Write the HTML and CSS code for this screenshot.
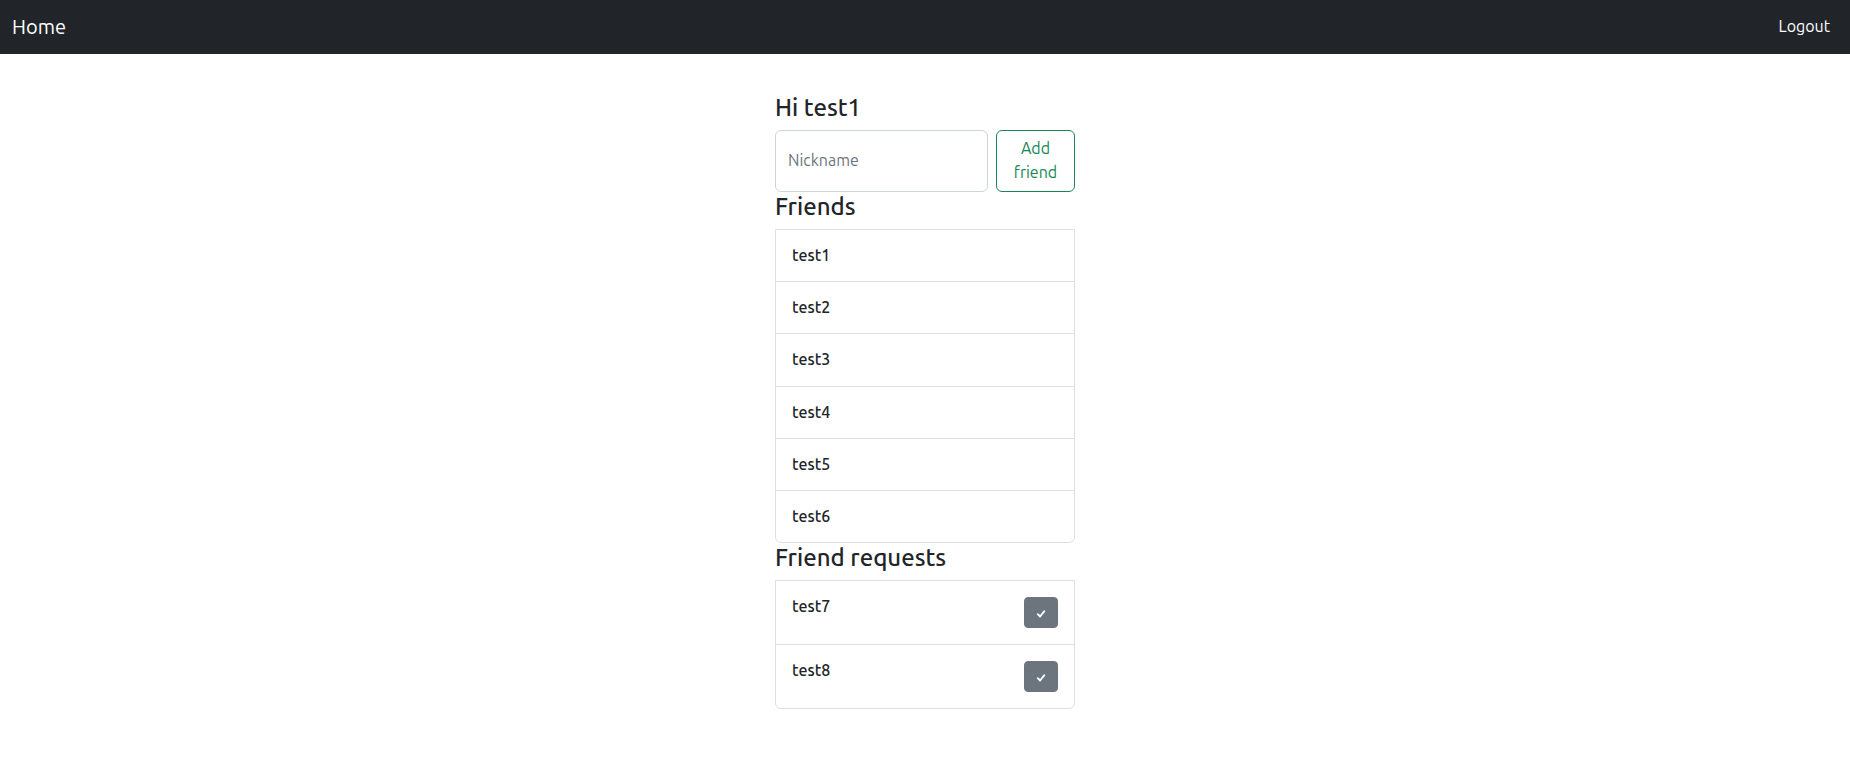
FILE: index.html
```html
<!DOCTYPE html>
<html lang="en">
<head>
<meta charset="utf-8">
<meta name="viewport" content="width=device-width, initial-scale=1">
<title>Home</title>
<link rel="stylesheet" href="styles.css">
</head>
<body>
<nav class="navbar">
  <a class="navbar-brand" href="#">Home</a>
  <a class="nav-link" href="#">Logout</a>
</nav>
<main class="content">
  <h1 class="heading">Hi test1</h1>
  <form class="add-form">
    <input class="form-control" type="text" placeholder="Nickname" aria-label="Nickname">
    <button class="btn-add" type="submit">Add friend</button>
  </form>
  <h2 class="heading">Friends</h2>
  <ul class="list">
    <li class="list-item"><span class="name">test1</span></li>
    <li class="list-item"><span class="name">test2</span></li>
    <li class="list-item"><span class="name">test3</span></li>
    <li class="list-item"><span class="name">test4</span></li>
    <li class="list-item"><span class="name">test5</span></li>
    <li class="list-item"><span class="name">test6</span></li>
  </ul>
  <h2 class="heading">Friend requests</h2>
  <ul class="list">
    <li class="list-item">
      <span class="name">test7</span>
      <button class="btn-accept" type="button" aria-label="Accept test7">
        <svg class="icon" viewBox="0 0 16 16" aria-hidden="true"><path d="M4.6 8.7 7 11.2 11.5 5.6"/></svg>
      </button>
    </li>
    <li class="list-item">
      <span class="name">test8</span>
      <button class="btn-accept" type="button" aria-label="Accept test8">
        <svg class="icon" viewBox="0 0 16 16" aria-hidden="true"><path d="M4.6 8.7 7 11.2 11.5 5.6"/></svg>
      </button>
    </li>
  </ul>
</main>
</body>
</html>
```
FILE: styles.css
```css
*,
*::before,
*::after {
  box-sizing: border-box;
}

body {
  margin: 0;
  background: #fff;
  color: #212529;
  font-family: Ubuntu, Roboto, "Noto Sans", sans-serif;
  font-size: 16px;
  line-height: 1.5;
}

.navbar {
  display: flex;
  align-items: center;
  justify-content: space-between;
  padding: 7px 12px;
  background: #212529;
}

.navbar-brand {
  padding: 5px 0;
  color: #fff;
  font-size: 20px;
  text-decoration: none;
}

.nav-link {
  padding: 7px 8px 9px;
  color: #fff;
  text-decoration: none;
}

.content {
  max-width: 300px;
  margin: 0 auto;
  padding: 39px 0;
}

.heading {
  margin: 0 0 7px;
  font-size: 24px;
  font-weight: 550;
  line-height: 30px;
}

.add-form {
  display: flex;
  gap: 8px;
}

.form-control {
  flex: 1;
  min-width: 0;
  padding: 5px 12px 7px;
  border: 1px solid #ced4da;
  border-radius: 6px;
  background: #fff;
  color: inherit;
  font: inherit;
}

.form-control::placeholder {
  color: #6c757d;
  opacity: 1;
}

.btn-add {
  flex: 0 0 79px;
  padding: 5px 12px 7px;
  border: 1px solid #198754;
  border-radius: 6px;
  background: transparent;
  color: #198754;
  font: inherit;
  cursor: pointer;
}

.list {
  margin: 0;
  padding: 0;
  border: 1px solid #dedfe0;
  border-radius: 0 0 6px 6px;
  list-style: none;
}

.list-item {
  display: flex;
  align-items: flex-start;
  justify-content: space-between;
  padding: 16px;
}

.list-item + .list-item {
  border-top: 1px solid #dedfe0;
}

.name {
  font-weight: 550;
  line-height: 1.2;
}

.btn-accept {
  display: flex;
  align-items: center;
  padding: 8px 8px 6px;
  border: 1px solid #6c757d;
  border-radius: 4px;
  background: #6c757d;
  color: #fff;
  cursor: pointer;
}

.icon {
  width: 16px;
  height: 15px;
  fill: none;
  stroke: currentColor;
  stroke-width: 2;
  stroke-linecap: round;
  stroke-linejoin: round;
}
```
